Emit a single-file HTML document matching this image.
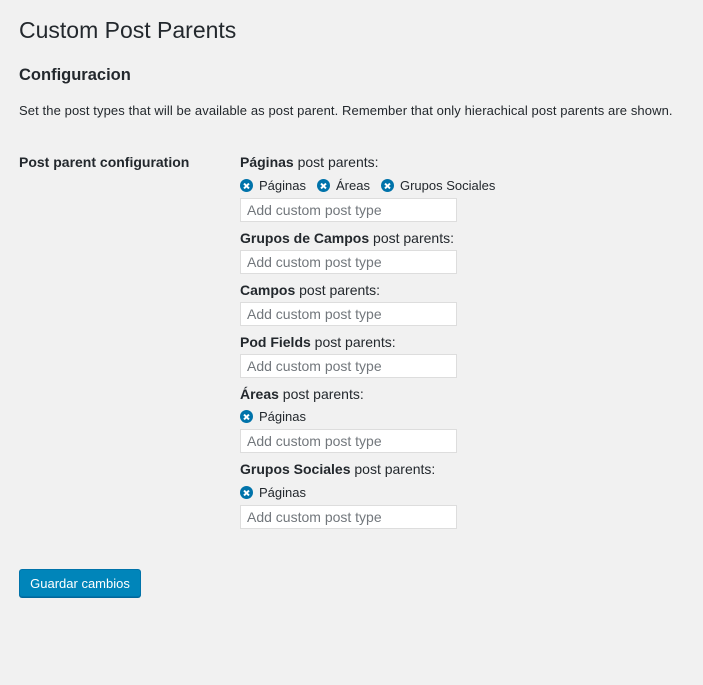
<!DOCTYPE html>
<html><head><meta charset="utf-8"><style>
body{margin:0;background:#f1f1f1;width:703px;height:685px;position:relative;font-family:"Liberation Sans",sans-serif;color:#23282d;font-size:13px;overflow:hidden}
.a{position:absolute;white-space:nowrap}
h1{position:absolute;left:19px;top:16px;margin:0;font-size:23px;font-weight:400;line-height:29px}
h2{position:absolute;left:19px;top:65px;margin:0;font-size:16.5px;font-weight:600;line-height:20px}
.lbl{font-size:14px;line-height:18px}
.in{position:absolute;left:240px;background:#fff;border:1px solid #ddd;font-size:14px;color:#72777c;line-height:22px;padding-left:6px;box-sizing:border-box;width:217px;height:24px}
.chip{display:inline-flex;align-items:center;margin-right:11px}
.x{width:13px;height:13px;border-radius:50%;background:#0073aa;color:#fff;display:inline-block;position:relative;margin-right:6px}
.x:before,.x:after{content:"";position:absolute;left:3px;top:5.5px;width:7px;height:2px;background:#fff;transform:rotate(45deg)}
.x:after{transform:rotate(-45deg)}
.btn{position:absolute;left:19px;top:569px;width:122px;height:28px;box-sizing:border-box;background:#0085ba;border:1px solid #0073aa;border-radius:3px;color:#fff;font-size:13px;text-align:center;line-height:27px;box-shadow:0 1px 0 #006799}
</style></head><body>
<h1>Custom Post Parents</h1>
<h2>Configuracion</h2>
<div class="a" style="left:19px;top:102px;line-height:17px;letter-spacing:0.1px">Set the post types that will be available as post parent. Remember that only hierachical post parents are shown.</div>
<div class="a lbl" style="left:19px;top:153px;font-weight:bold">Post parent configuration</div>

<div class="a lbl" style="left:240px;top:153px"><b>Páginas</b> post parents:</div>
<div class="a" style="left:240px;top:177px;line-height:17px"><span class="chip"><span class="x"></span>Páginas</span><span class="chip"><span class="x"></span>Áreas</span><span class="chip"><span class="x"></span>Grupos Sociales</span></div>
<div class="in" style="top:198px">Add custom post type</div>

<div class="a lbl" style="left:240px;top:229px"><b>Grupos de Campos</b> post parents:</div>
<div class="in" style="top:250px">Add custom post type</div>

<div class="a lbl" style="left:240px;top:281px"><b>Campos</b> post parents:</div>
<div class="in" style="top:302px">Add custom post type</div>

<div class="a lbl" style="left:240px;top:333px"><b>Pod Fields</b> post parents:</div>
<div class="in" style="top:354px">Add custom post type</div>

<div class="a lbl" style="left:240px;top:385px"><b>Áreas</b> post parents:</div>
<div class="a" style="left:240px;top:408px;line-height:17px"><span class="chip"><span class="x"></span>Páginas</span></div>
<div class="in" style="top:429px">Add custom post type</div>

<div class="a lbl" style="left:240px;top:460px"><b>Grupos Sociales</b> post parents:</div>
<div class="a" style="left:240px;top:484px;line-height:17px"><span class="chip"><span class="x"></span>Páginas</span></div>
<div class="in" style="top:505px">Add custom post type</div>

<div class="btn">Guardar cambios</div>
</body></html>
